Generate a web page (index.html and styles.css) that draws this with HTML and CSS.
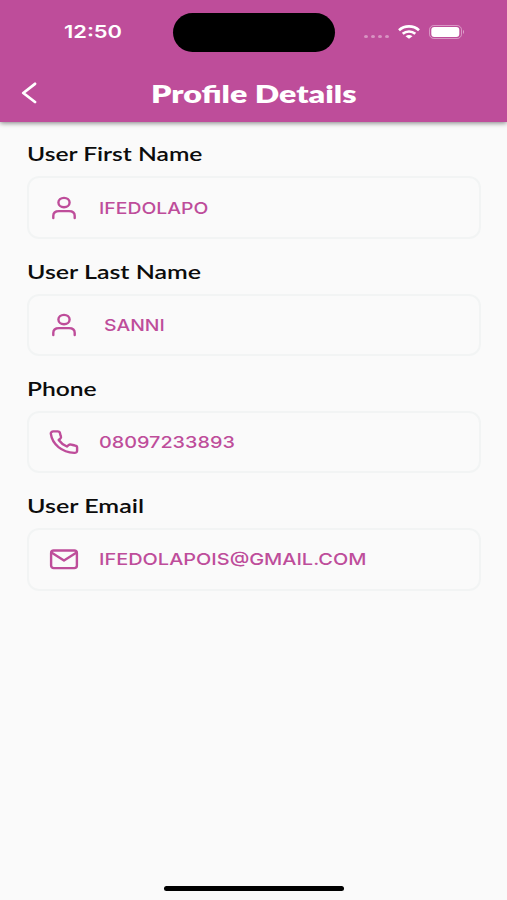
FILE: index.html
```html
<!DOCTYPE html>
<html lang="en">
<head>
<meta charset="utf-8">
<title>Profile Details</title>
<link rel="stylesheet" href="styles.css">
</head>
<body>
<header class="header">
  <div class="status">
    <div class="side left"><span class="time">12:50</span></div>
    <div class="island"></div>
    <div class="side right">
      <div class="dots"><i></i><i></i><i></i><i></i></div>
      <svg class="wifi" width="22" height="14" viewBox="0 0 22 14" fill="none" stroke="#fff" stroke-width="2.7"><path d="M1 5.200C6.600.2 15.400.2 21 5.200M4.700 8.800c3.600-3.100 9-3.100 12.600 0"/><path d="M11 13.800 7.500 11.200q3.500-2.400 7 0z" fill="#fff" stroke="none"/></svg>
      <svg class="battery" width="36" height="14" viewBox="0 0 36 14"><rect x=".5" y=".5" width="32" height="13" rx="4.3" fill="none" stroke="#fff" stroke-opacity=".42"/><rect x="2.3" y="2" width="28" height="10" rx="3" fill="#fff"/><path d="M34 4.800q2 2.200 0 4.400z" fill="#fff" fill-opacity=".5"/></svg>
    </div>
  </div>
  <div class="nav">
    <svg class="back" width="16" height="22" viewBox="0 0 16 22" fill="none" stroke="#fff" stroke-width="2.8" stroke-linecap="round" stroke-linejoin="round"><path d="M14 1.800 2.300 11l11.700 9"/></svg>
    <h1 class="title">Profile Details</h1>
  </div>
</header>
<main class="form">
  <section class="field">
    <h2 class="label first">User First Name</h2>
    <div class="box">
      <svg class="icon" width="30" height="26" viewBox="0 0 30 26"><ellipse cx="15" cy="7.600" rx="5.600" ry="4.700"/><path d="M4.300 23v-2.200c0-3 2.200-4.700 5.700-4.700h10c3.500 0 5.700 1.700 5.700 4.700V23"/></svg>
      <span class="value v-first">IFEDOLAPO</span>
    </div>
  </section>
  <section class="field">
    <h2 class="label last">User Last Name</h2>
    <div class="box">
      <svg class="icon" width="30" height="26" viewBox="0 0 30 26"><ellipse cx="15" cy="7.600" rx="5.600" ry="4.700"/><path d="M4.300 23v-2.200c0-3 2.200-4.700 5.700-4.700h10c3.500 0 5.700 1.700 5.700 4.700V23"/></svg>
      <span class="value v-last">SANNI</span>
    </div>
  </section>
  <section class="field">
    <h2 class="label phone">Phone</h2>
    <div class="box">
      <svg class="icon" width="30" height="26" viewBox="0 0 30 26"><path d="M4.300 2.400h4.300c1.300 0 2.200.700 2.400 1.800.200 1.100.500 2.100.900 3.100.300.800.100 1.700-.600 2.300l-1.600 1.400c2 2.900 4.700 4.900 8.200 6.500l1.700-1.400c.700-.600 1.800-.700 2.700-.400 1.200.400 2.400.600 3.600.800 1.400.200 2.200 1 2.200 2.100v3.100c0 1.400-1.200 2.300-2.800 2.200C12.900 23.200 3.300 15.600 1.800 4.700 1.600 3.400 2.800 2.400 4.300 2.400z"/></svg>
      <span class="value v-phone">08097233893</span>
    </div>
  </section>
  <section class="field">
    <h2 class="label email">User Email</h2>
    <div class="box">
      <svg class="icon" width="30" height="26" viewBox="0 0 30 26"><rect x="2.100" y="4.500" width="25.800" height="17.600" rx="2.600"/><path d="m2.400 6.500 12.600 8 12.600-8"/></svg>
      <span class="value v-email">IFEDOLAPOIS@GMAIL.COM</span>
    </div>
  </section>
</main>
<footer class="home"></footer>
</body>
</html>
```

FILE: styles.css
```css
* { box-sizing: border-box; }
body {
  margin: 0;
  width: 507px;
  height: 900px;
  display: flex;
  flex-direction: column;
  background: #fafafa;
  font-family: "Lato", sans-serif;
  overflow: hidden;
}
.header {
  height: 122px;
  background: #be4d9a;
  color: #fff;
  box-shadow: 0 1px 5px rgba(0, 0, 0, .5);
}
.status { display: flex; height: 64px; align-items: center; }
.side { display: flex; align-items: center; }
.left { width: 173px; padding-left: 64px; }
.right { padding-left: 29px; }
.time {
  font: 600 17.5px/20px "Inter", sans-serif;
  transform: scaleX(1.25);
  transform-origin: left;
}
.island { width: 162px; height: 39px; border-radius: 20px; background: #000; }
.dots { display: flex; gap: 3px; padding-top: 9px; }
.dots i { width: 4px; height: 3px; border-radius: 50%; background: rgba(255, 255, 255, .4); }
.wifi { margin-left: 9px; }
.battery { margin-left: 9px; }
.nav { display: flex; height: 58px; align-items: center; padding-left: 21px; }
.title {
  margin: -1px 0 0 114px;
  font-size: 25px;
  line-height: 30px;
  font-weight: 800;
  white-space: nowrap;
  transform: scaleX(1.287);
  transform-origin: left;
}
.form { flex: 1; padding: 19.3px 26px 0 27px; }
.field { height: 117.25px; }
.label {
  margin: 0;
  height: 35px;
  width: max-content;
  font-size: 18.5px;
  line-height: 26px;
  font-weight: 600;
  color: #0c0c0c;
  transform: scaleX(1.33);
  transform-origin: left;
}
.last { transform: scaleX(1.35); }
.email { transform: scaleX(1.355); }
.box {
  display: flex;
  align-items: center;
  height: 62.5px;
  padding-left: 20px;
  border: 2px solid #f2f4f4;
  border-radius: 12px;
}
.icon { fill: none; stroke: #be4d9a; stroke-width: 2.4; stroke-linejoin: round; stroke-linecap: round; }
.value {
  margin-left: 20px;
  font: 500 16.5px/20px "Inter", sans-serif;
  color: #be4d9a;
  transform: scaleX(1.175);
  transform-origin: left;
}
.v-last { margin-left: 25px; }
.v-phone { transform: scaleX(1.2); }
.v-email { transform: scaleX(1.208); }
.home { width: 180px; height: 5px; margin: 0 auto 9px 164px; border-radius: 3px; background: #000; }
```
